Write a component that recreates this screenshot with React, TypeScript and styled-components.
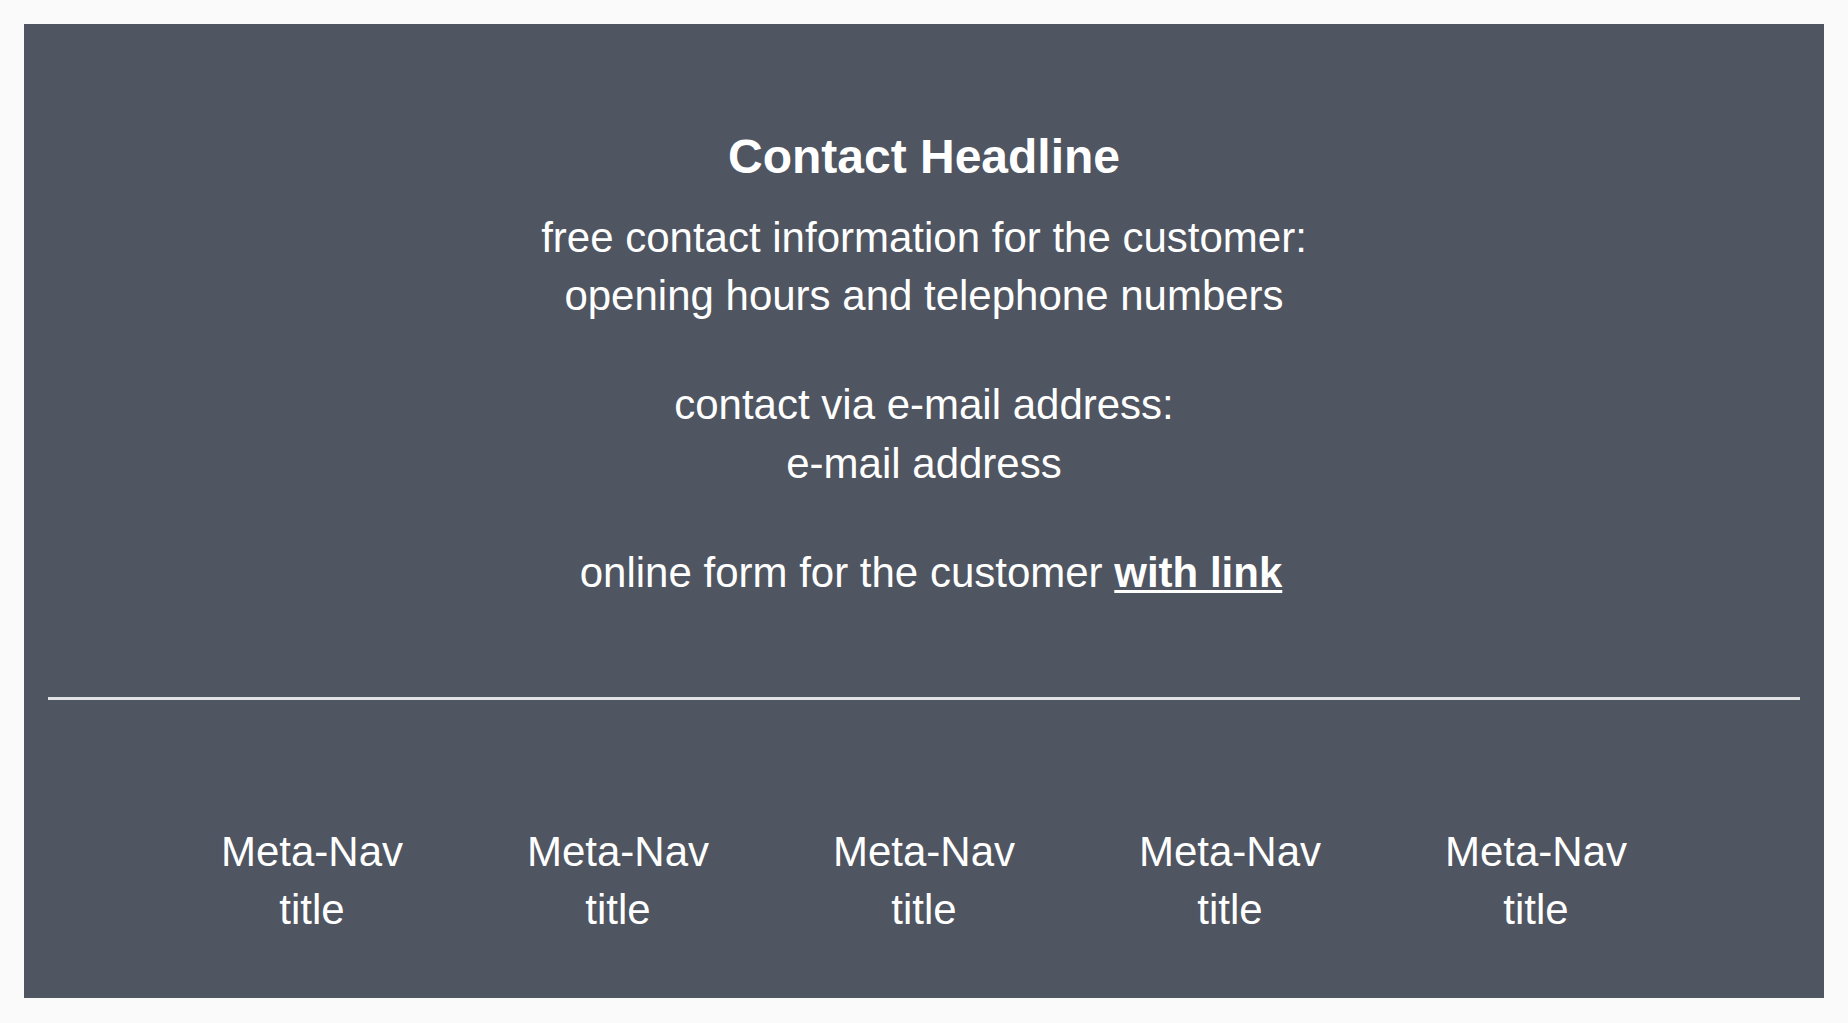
import * as React from 'react';
import styled, { createGlobalStyle } from 'styled-components';

const GlobalStyle = createGlobalStyle`
  html, body {
    margin: 0;
    padding: 0;
    background: #fafafa;
  }

  body {
    font-family: "Liberation Sans", Arial, sans-serif;
  }
`;

const Page = styled.div`
  padding: 24px;
`;

const Footer = styled.footer`
  background: #4f5561;
  color: #ffffff;
  padding: 104px 24px 58px;
  display: flex;
  flex-direction: column;
`;

const Contact = styled.section`
  display: flex;
  flex-direction: column;
  align-items: center;
  text-align: center;
`;

const Headline = styled.h2`
  margin: 0 0 23px;
  font-size: 48px;
  line-height: 1.2;
  font-weight: 700;
`;

const Copy = styled.p<{ $indent?: number }>`
  margin: 0 0 50px;
  padding-left: ${(p) => p.$indent ?? 0}px;
  font-size: 42px;
  line-height: 1.4;
  font-weight: 400;

  &:last-child {
    margin-bottom: 0;
  }
`;

const CopyLink = styled.a`
  color: #ffffff;
  font-weight: 700;
  text-decoration: underline;
  text-decoration-thickness: 3px;
  text-underline-offset: 3px;
`;

const Rule = styled.hr`
  margin: 94px 0 123px;
  border: 0;
  height: 3px;
  background: #e2e3e5;
`;

const MetaNav = styled.nav`
  display: grid;
  grid-template-columns: repeat(5, 306px);
  justify-content: center;
`;

const MetaLink = styled.a`
  color: #ffffff;
  text-decoration: none;
  text-align: center;
  font-size: 42px;
  line-height: 1.4;
`;

const metaItems = ['Meta-Nav', 'Meta-Nav', 'Meta-Nav', 'Meta-Nav', 'Meta-Nav'];

export default function App() {
  return (
    <Page>
      <GlobalStyle />
      <Footer>
        <Contact>
          <Headline>Contact Headline</Headline>
          <Copy>
            free contact information for the customer:
            <br />
            opening hours and telephone numbers
          </Copy>
          <Copy>
            contact via e-mail address:
            <br />
            e-mail address
          </Copy>
          <Copy $indent={14}>
            online form for the customer <CopyLink href="#">with link</CopyLink>
          </Copy>
        </Contact>
        <Rule />
        <MetaNav>
          {metaItems.map((label, i) => (
            <MetaLink key={i} href="#">
              {label}
              <br />
              title
            </MetaLink>
          ))}
        </MetaNav>
      </Footer>
    </Page>
  );
}
